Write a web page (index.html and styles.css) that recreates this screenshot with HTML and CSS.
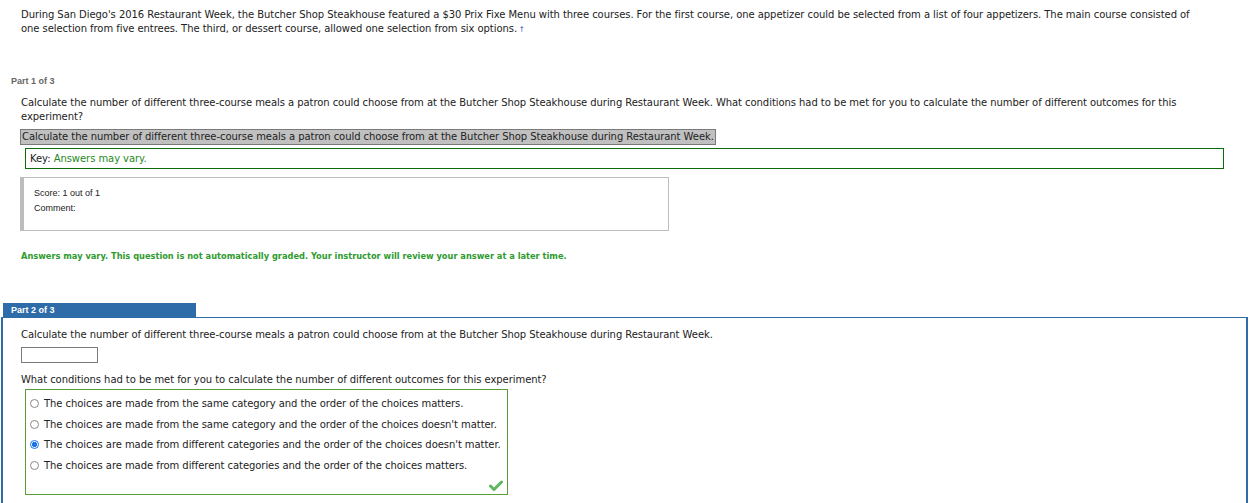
FILE: index.html
```html
<!DOCTYPE html>
<html>
<head>
<meta charset="utf-8">
<link rel="stylesheet" href="styles.css">
</head>
<body>
<div class="page">
  <p class="intro">During San Diego's 2016 Restaurant Week, the Butcher Shop Steakhouse featured a $30 Prix Fixe Menu with three courses. For the first course, one appetizer could be selected from a list of four appetizers. The main course consisted of one selection from five entrees. The third, or dessert course, allowed one selection from six options.<span class="dag">†</span></p>

  <section class="part1">
    <div class="part-label">Part 1 of 3</div>
    <div class="part-body">
      <p class="q">Calculate the number of different three-course meals a patron could choose from at the Butcher Shop Steakhouse during Restaurant Week. What conditions had to be met for you to calculate the number of different outcomes for this experiment?</p>
      <div class="answer-row"><span class="answer">Calculate the number of different three-course meals a patron could choose from at the Butcher Shop Steakhouse during Restaurant Week.</span></div>
      <div class="key">Key: <span class="green">Answers may vary.</span></div>
      <div class="score">
        <div>Score: 1 out of 1</div>
        <div>Comment:</div>
      </div>
      <p class="graded">Answers may vary. This question is not automatically graded. Your instructor will review your answer at a later time.</p>
    </div>
  </section>

  <section class="part2">
    <div class="tab">Part 2 of 3</div>
    <div class="panel">
      <p class="q">Calculate the number of different three-course meals a patron could choose from at the Butcher Shop Steakhouse during Restaurant Week.</p>
      <div class="input"></div>
      <p class="q q2">What conditions had to be met for you to calculate the number of different outcomes for this experiment?</p>
      <div class="choices">
        <label class="choice"><span class="radio"></span>The choices are made from the same category and the order of the choices matters.</label>
        <label class="choice"><span class="radio"></span>The choices are made from the same category and the order of the choices doesn't matter.</label>
        <label class="choice"><span class="radio on"></span>The choices are made from different categories and the order of the choices doesn't matter.</label>
        <label class="choice"><span class="radio"></span>The choices are made from different categories and the order of the choices matters.</label>
        <div class="check-row">
          <svg class="check" width="14" height="11" viewBox="0 0 14 11"><path d="M1.5 6 L5 9.5 L12.5 2" fill="none" stroke="#5cb85c" stroke-width="3" stroke-linecap="round" stroke-linejoin="round"/></svg>
        </div>
      </div>
    </div>
  </section>
</div>
</body>
</html>
```

FILE: styles.css
```css
html, body {
  margin: 0;
  padding: 0;
  background: #fff;
}
body {
  font-family: "DejaVu Sans", Verdana, sans-serif;
  font-size: 10px;
  letter-spacing: -0.06px;
  color: #1a1a2e;
}
p { margin: 0; }
.page {
  width: 1250px;
}
.intro {
  padding: 8px 58px 0 21px;
  line-height: 14px;
  color: #222;
}
.dag {
  color: #3333cc;
  font-size: 7px;
  vertical-align: top;
  margin-left: 3px;
}
.part1 {
  margin-top: 39px;
}
.part-label {
  font-family: "Liberation Sans", Arial, sans-serif;
  font-weight: bold;
  font-size: 9px;
  letter-spacing: 0;
  color: #666;
  padding-left: 11px;
  line-height: 12px;
}
.part-body {
  padding: 9px 0 0 20px;
}
.q {
  padding-left: 1px;
  padding-right: 70px;
  line-height: 14px;
  color: #222;
}
.answer-row {
  margin-top: 5px;
  display: flex;
}
.answer {
  display: inline-block;
  background: #c0c0c0;
  border: 1px solid #7a7a7a;
  line-height: 14px;
  padding: 0 1px;
  color: #222;
}
.key {
  margin: 3px 26px 0 5px;
  border: 1px solid #0c6b0c;
  height: 19px;
  line-height: 19px;
  padding-left: 4px;
  color: #222;
}
.green { color: #1e8a1e; }
.score {
  margin-top: 8px;
  width: 634px;
  height: 44px;
  border: 1px solid #bdbdbd;
  border-left: 4px solid #bdbdbd;
  padding: 8px 0 0 10px;
  font-family: "Liberation Sans", Arial, sans-serif;
  font-size: 9px;
  letter-spacing: 0;
  color: #222;
  line-height: 15px;
}
.graded {
  margin-top: 19px;
  padding-left: 1px;
  font-weight: bold;
  font-size: 8.25px;
  letter-spacing: 0;
  color: #2e9b2e;
  line-height: 12px;
}
.part2 {
  margin-top: 41px;
  padding-left: 1px;
}
.tab {
  margin-left: 2px;
  width: 185px;
  background: #2d6ca9;
  color: #fff;
  font-family: "Liberation Sans", Arial, sans-serif;
  font-weight: bold;
  font-size: 9px;
  letter-spacing: 0;
  line-height: 14px;
  padding-left: 8px;
}
.panel {
  width: 1247px;
  border: 2px solid #2d6ca9;
  border-bottom: none;
  border-top-width: 1px;
  padding: 10px 0 8px 17px;
  box-sizing: border-box;
  min-height: 190px;
}
.input {
  margin: 5px 0 0 1px;
  width: 75px;
  height: 14px;
  border: 1px solid #7a7a7a;
}
.q2 {
  margin-top: 10px;
}
.choices {
  margin: 2px 0 0 5px;
  width: 481px;
  border: 1px solid #5a9c38;
  padding: 3px 0 0 0;
}
.choice {
  display: flex;
  align-items: center;
  height: 20.7px;
  padding-left: 4px;
  color: #222;
  white-space: nowrap;
}
.radio {
  width: 9px;
  height: 9px;
  border: 1px solid #888;
  border-radius: 50%;
  margin-right: 5px;
  box-sizing: border-box;
  flex: none;
  background: #fff;
}
.radio.on {
  border: 1px solid #1a73e8;
  background: radial-gradient(circle, #1a73e8 0 2.4px, #fff 2.9px);
}
.check-row {
  display: flex;
  justify-content: flex-end;
  padding: 4px 4px 3px 0;
  height: 11px;
}
.check { display: block; }
```
